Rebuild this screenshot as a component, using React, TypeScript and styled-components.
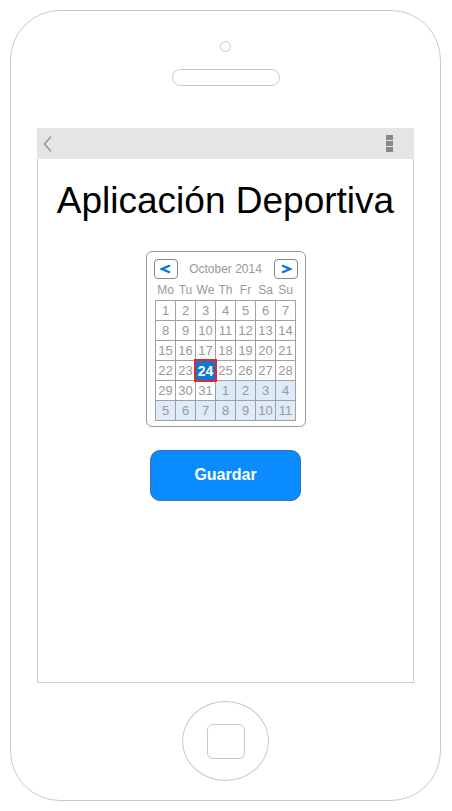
import React, { FC } from 'react'
import styled, { createGlobalStyle, css } from 'styled-components'

const GlobalStyle = createGlobalStyle`
  html, body {
    margin: 0;
    padding: 0;
    background: #ffffff;
    font-family: 'Liberation Sans', Arial, sans-serif;
  }
  * {
    box-sizing: border-box;
  }
`

const Phone = styled.div`
  width: 431px;
  height: 791px;
  margin: 10px 0 0 10px;
  border: 1px solid #c8c8c8;
  border-radius: 50px;
  display: flex;
  flex-direction: column;
  align-items: center;
`

const Camera = styled.div`
  width: 11px;
  height: 11px;
  margin-top: 30px;
  border: 1px solid #c8c8c8;
  border-radius: 50%;
`

const Speaker = styled.div`
  width: 108px;
  height: 17px;
  margin-top: 17px;
  border: 1px solid #c8c8c8;
  border-radius: 9px;
`

const Screen = styled.div`
  width: 377px;
  height: 555px;
  margin-top: 42px;
  border: 1px solid #cccccc;
  border-top: none;
  display: flex;
  flex-direction: column;
  align-items: center;
`

const TopBar = styled.div`
  width: calc(100% + 2px);
  margin: 0 -1px;
  height: 31px;
  background: #e5e5e5;
  display: flex;
  align-items: center;
  justify-content: space-between;
  padding: 0 21px 0 6px;
`

const Kebab = styled.div`
  display: flex;
  flex-direction: column;
  gap: 1px;
  span {
    width: 7px;
    height: 5px;
    background: #888888;
  }
`

const Title = styled.h1`
  margin: 20px 0 0;
  font-size: 37px;
  line-height: 43px;
  font-weight: normal;
  color: #000000;
  white-space: nowrap;
`

const Calendar = styled.div`
  width: 160px;
  height: 176px;
  margin-top: 29px;
  border: 1px solid #999999;
  border-radius: 6px;
  padding: 7px 7px 0;
  display: flex;
  flex-direction: column;
  align-items: center;
`

const NavRow = styled.div`
  width: 100%;
  display: flex;
  align-items: center;
  justify-content: space-between;
`

const NavButton = styled.button`
  width: 24px;
  height: 20px;
  padding: 0;
  border: 1px solid #888888;
  border-radius: 4px;
  background: #ffffff;
  display: flex;
  align-items: center;
  justify-content: center;
`

const Month = styled.span`
  font-size: 12px;
  color: #999999;
`

const WeekDays = styled.div`
  display: grid;
  grid-template-columns: repeat(7, 19px);
  column-gap: 1px;
  padding: 0 1px;
  margin-top: 2px;
  height: 18px;
  align-items: center;
  span {
    text-align: center;
    font-size: 12px;
    color: #999999;
  }
`

const Grid = styled.div`
  display: grid;
  grid-template-columns: repeat(7, 19px);
  grid-auto-rows: 19px;
  gap: 1px;
  border: 1px solid #a0a0a0;
  background: #a0a0a0;
  margin-top: 1px;
`

const Day = styled.div<{ $other?: boolean; $selected?: boolean }>`
  display: flex;
  align-items: center;
  justify-content: center;
  font-size: 13px;
  color: #999999;
  background: ${p => (p.$other ? '#deebf8' : '#ffffff')};
  ${p =>
    p.$selected &&
    css`
      background: #0f78d6;
      color: #ffffff;
      font-weight: bold;
      font-size: 14px;
      outline: 2px solid #e02828;
      outline-offset: 0px;
      position: relative;
      z-index: 1;
    `}
`

const SaveButton = styled.button`
  width: 151px;
  height: 51px;
  margin-top: 23px;
  padding: 0 0 2px;
  border: 1px solid #3a6fa8;
  border-radius: 10px;
  background: #0a8bff;
  color: #ffffff;
  font-family: 'Liberation Sans', Arial, sans-serif;
  font-weight: bold;
  font-size: 16px;
`

const HomeButton = styled.div`
  width: 87px;
  height: 80px;
  margin-top: 18px;
  border: 1px solid #c8c8c8;
  border-radius: 50%;
  display: flex;
  align-items: center;
  justify-content: center;
`

const HomeSquare = styled.div`
  width: 38px;
  height: 35px;
  border: 1px solid #c8c8c8;
  border-radius: 6px;
`

const weekDays = ['Mo', 'Tu', 'We', 'Th', 'Fr', 'Sa', 'Su']

// the mockup lists 1..7 on the first row, then the next month fills up
const buildDays = () => {
  const days: { n: number; other: boolean }[] = []
  for (let i = 1; i <= 31; i++) days.push({ n: i, other: false })
  for (let i = 1; days.length < 42; i++) days.push({ n: i, other: true })
  return days
}

const Arrow: FC<{ dir: 'left' | 'right' }> = ({ dir }) => (
  <svg width="12" height="12" viewBox="0 0 12 12">
    <polyline
      points={dir === 'left' ? '10,2.5 2,6 10,9.5' : '2,2.5 10,6 2,9.5'}
      fill="none"
      stroke="#0a78d6"
      strokeWidth="2.4"
      strokeLinejoin="miter"
    />
  </svg>
)

const App: FC = () => {
  const days = buildDays()

  return (
    <>
      <GlobalStyle />
      <Phone>
        <Camera />
        <Speaker />
        <Screen>
          <TopBar>
            <svg width="10" height="18" viewBox="0 0 10 18">
              <polyline points="8,1.5 1.5,9 8,16.5" fill="none" stroke="#9a9a9a" strokeWidth="1.6" />
            </svg>
            <Kebab>
              <span />
              <span />
              <span />
            </Kebab>
          </TopBar>
          <Title>Aplicación Deportiva</Title>
          <Calendar>
            <NavRow>
              <NavButton aria-label="previous">
                <Arrow dir="left" />
              </NavButton>
              <Month>October 2014</Month>
              <NavButton aria-label="next">
                <Arrow dir="right" />
              </NavButton>
            </NavRow>
            <WeekDays>
              {weekDays.map(d => (
                <span key={d}>{d}</span>
              ))}
            </WeekDays>
            <Grid>
              {days.map((d, i) => (
                <Day key={i} $other={d.other} $selected={!d.other && d.n === 24}>
                  {d.n}
                </Day>
              ))}
            </Grid>
          </Calendar>
          <SaveButton>Guardar</SaveButton>
        </Screen>
        <HomeButton>
          <HomeSquare />
        </HomeButton>
      </Phone>
    </>
  )
}

export default App
